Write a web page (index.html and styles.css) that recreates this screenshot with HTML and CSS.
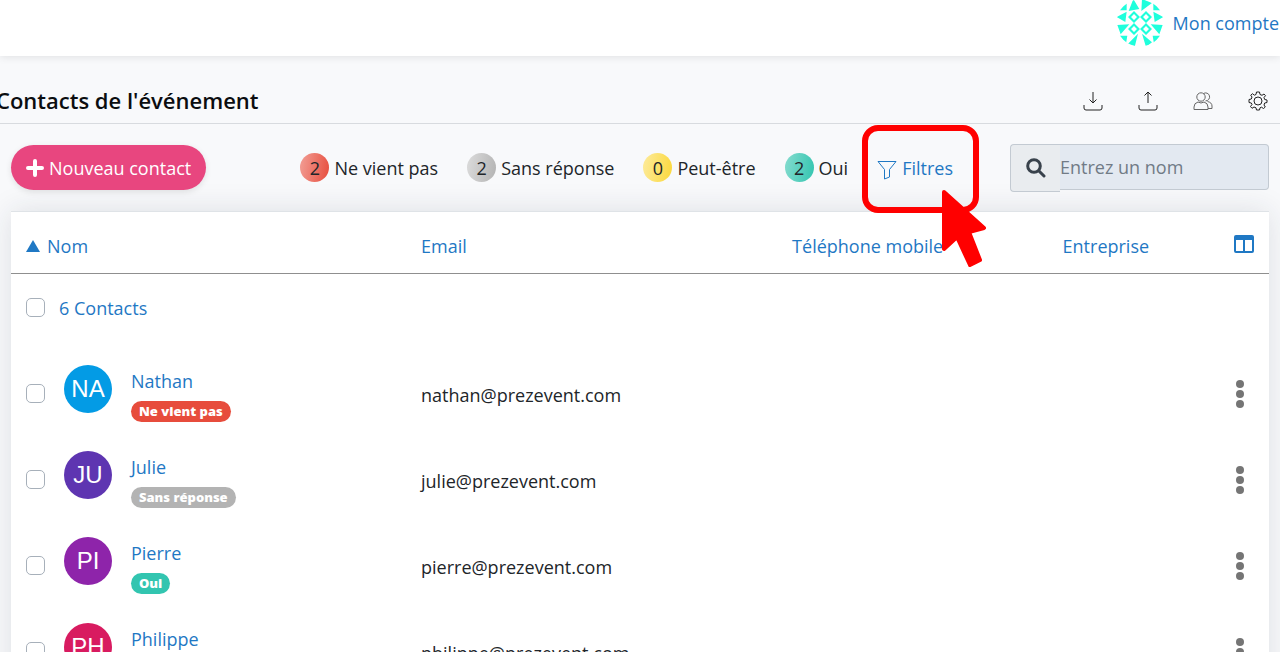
FILE: index.html
```html
<!DOCTYPE html>
<html lang="fr">
<head>
<meta charset="utf-8">
<meta name="viewport" content="width=device-width, initial-scale=1">
<title>Contacts de l'événement</title>
<link rel="stylesheet" href="styles.css">
</head>
<body>
<header class="topbar">
  <a class="account" href="#">
    <svg class="account-avatar" viewBox="0 0 144 144" aria-hidden="true">
      <defs><clipPath id="disc"><circle cx="72" cy="72" r="71"/></clipPath></defs>
      <g clip-path="url(#disc)" fill="#1fffdc">
        <path d="M52 0L70 30L38 36ZM78 0L108 12L76 36Z"/>
        <path d="M66 104L36 134L56 144ZM78 104L108 130L90 144Z"/>
        <path d="M2 54L32 38L28 69ZM4 78L40 76L14 106Z"/>
        <path d="M142 54L112 38L116 69ZM140 78L104 76L130 106Z"/>
        <path d="M10 34L32 12V34ZM112 12L134 34H112ZM10 110H34L30 134ZM110 110H134L114 134Z"/>
        <path fill-rule="evenodd" d="M54 36L72 54L54 72L36 54ZM54 45L45 54L54 63L63 54ZM90 36L108 54L90 72L72 54ZM90 45L81 54L90 63L99 54ZM54 72L72 90L54 108L36 90ZM54 81L45 90L54 99L63 90ZM90 72L108 90L90 108L72 90ZM90 81L81 90L90 99L99 90Z"/>
      </g>
    </svg>
    <span>Mon compte</span>
  </a>
</header>
<main class="page">
  <div class="heading">
    <h1 class="title">Contacts de l'événement</h1>
    <div class="actions">
      <button class="icon-btn" type="button" aria-label="Importer"><svg viewBox="0 0 20 20"><path d="M1 14V17Q1 19 3 19H17Q19 19 19 17V14M10 1V12M6.500 8.500L10 12L13.500 8.500"/></svg></button>
      <button class="icon-btn" type="button" aria-label="Exporter"><svg viewBox="0 0 20 20"><path d="M1 14V17Q1 19 3 19H17Q19 19 19 17V14M10 12V1M6.500 4.500L10 1L13.500 4.500"/></svg></button>
      <button class="icon-btn users" type="button" aria-label="Groupes"><svg viewBox="0 0 20 20"><circle cx="8" cy="6" r="4.200"/><path d="M1 18.500V16Q1 12 5 11Q8 13 11 11Q15 12 15 16V18.500ZM10.500 2.500A4 4 0 1 1 12.500 9.900M14.500 10.500Q19 11.500 19 15V17.500H15"/></svg></button>
      <button class="icon-btn" type="button" aria-label="Paramètres"><svg viewBox="0 0 20 20"><circle cx="10" cy="10" r="4"/><path d="M8.500 1H11.500L12 3.500L14 4.300L16 3L17.500 4.700L16 6.500L16.700 8.500L19 9V11.500L16.700 12L16 14L17.300 16L15.500 17.500L13.500 16.200L12 16.800L11.500 19H8.500L8 16.800L6 16L4 17.300L2.500 15.500L4 13.500L3.300 12L1 11.500V8.500L3.300 8L4 6L2.700 4.200L4.500 2.700L6.300 4.200L8 3.500Z"/></svg></button>
    </div>
  </div>
  <div class="toolbar">
    <button class="new-contact" type="button"><svg class="plus" viewBox="0 0 18 18" aria-hidden="true"><path d="M9 2V16M2 9H16"/></svg>Nouveau contact</button>
    <div class="filters">
      <span class="stat"><span class="count declined">2</span>Ne vient pas</span>
      <span class="stat"><span class="count pending">2</span>Sans réponse</span>
      <span class="stat"><span class="count maybe">0</span>Peut-être</span>
      <span class="stat"><span class="count accepted">2</span>Oui</span>
      <a class="filter-link" href="#">
        <svg class="funnel" viewBox="0 0 20 20" aria-hidden="true"><path d="M1 1.500H19L12.500 9.500V17L7.500 19V9.500Z"/></svg>Filtres
        <span class="highlight"></span>
        <svg class="pointer" viewBox="0 0 46 80" aria-hidden="true"><path d="M3 3L43 39L28 43L39 71L29 76L16 48L3 60Z"/></svg>
      </a>
    </div>
    <div class="search">
      <label class="search-icon" for="search"><svg viewBox="0 0 20 20" role="img" aria-label="Rechercher"><circle cx="8" cy="8" r="6.300"/><path d="M13 13L18 18"/></svg></label>
      <input class="search-input" id="search" type="text" placeholder="Entrez un nom">
    </div>
  </div>
  <table class="contacts">
    <colgroup><col class="col-name"><col class="col-email"><col class="col-phone"><col class="col-company"><col class="col-menu"></colgroup>
    <thead>
      <tr>
        <th><a class="sort" href="#"><span class="arrow"></span>Nom</a></th>
        <th><a href="#">Email</a></th>
        <th><a href="#">Téléphone mobile</a></th>
        <th><a href="#">Entreprise</a></th>
        <th class="menu-cell"><button class="columns" type="button" aria-label="Colonnes"><svg viewBox="0 0 20 18"><path fill-rule="evenodd" d="M2 0H18Q20 0 20 2V16Q20 18 18 18H2Q0 18 0 16V2Q0 0 2 0ZM2 5V16H9V5ZM11 5V16H18V5Z"/></svg></button></th>
      </tr>
    </thead>
    <tbody>
      <tr class="all"><td colspan="5"><label class="select-all"><input class="check" type="checkbox">6 Contacts</label></td></tr>
      <tr>
        <td><div class="person"><input class="check" type="checkbox" aria-label="Nathan"><span class="avatar blue">NA</span><div class="identity"><a href="#">Nathan</a><span class="badge declined-bg">Ne vient pas</span></div></div></td>
        <td class="email">nathan@prezevent.com</td><td></td><td></td>
        <td class="menu-cell"><button class="dots" type="button" aria-label="Actions"><i></i><i></i><i></i></button></td>
      </tr>
      <tr>
        <td><div class="person"><input class="check" type="checkbox" aria-label="Julie"><span class="avatar indigo">JU</span><div class="identity"><a href="#">Julie</a><span class="badge pending-bg">Sans réponse</span></div></div></td>
        <td class="email">julie@prezevent.com</td><td></td><td></td>
        <td class="menu-cell"><button class="dots" type="button" aria-label="Actions"><i></i><i></i><i></i></button></td>
      </tr>
      <tr>
        <td><div class="person"><input class="check" type="checkbox" aria-label="Pierre"><span class="avatar purple">PI</span><div class="identity"><a href="#">Pierre</a><span class="badge accepted-bg">Oui</span></div></div></td>
        <td class="email">pierre@prezevent.com</td><td></td><td></td>
        <td class="menu-cell"><button class="dots" type="button" aria-label="Actions"><i></i><i></i><i></i></button></td>
      </tr>
      <tr>
        <td><div class="person"><input class="check" type="checkbox" aria-label="Philippe"><span class="avatar pink">PH</span><div class="identity"><a href="#">Philippe</a></div></div></td>
        <td class="email">philippe@prezevent.com</td><td></td><td></td>
        <td class="menu-cell"><button class="dots" type="button" aria-label="Actions"><i></i><i></i><i></i></button></td>
      </tr>
    </tbody>
  </table>
</main>
</body>
</html>
```
FILE: styles.css
```css
* { box-sizing: border-box; }
body {
  margin: 0;
  height: 100vh;
  overflow: hidden;
  background: #f8f9fb;
  color: #212529;
  font: 18px/24px "Open Sans", "Noto Sans", sans-serif;
}
a { color: #1f78c4; text-decoration: none; }
button { border: 0; padding: 0; background: none; font: inherit; cursor: pointer; }
svg { display: block; }

.topbar {
  display: flex;
  justify-content: flex-end;
  height: 56px;
  background: #fff;
  box-shadow: 0 1px 8px rgba(0, 0, 0, 0.1);
}
.account { display: flex; align-items: center; gap: 9px; height: 46px; padding-right: 1px; }
.account-avatar { width: 48px; height: 48px; }

.heading {
  display: flex;
  align-items: center;
  justify-content: space-between;
  height: 68px;
  padding: 20px 12px 0 0;
  border-bottom: 1px solid #d8dbdf;
}
.title { margin: 0 0 0 -4px; color: #0b0d10; font-size: 22px; line-height: 30px; font-weight: 600; }
.actions { display: flex; gap: 35px; padding-top: 3px; }
.icon-btn svg { width: 20px; height: 20px; fill: none; stroke: #222; stroke-width: 1; }
.icon-btn.users svg { stroke: #666; }

.toolbar { display: flex; align-items: center; height: 87px; padding: 0 11px; }
.new-contact {
  display: flex;
  align-items: center;
  gap: 5px;
  height: 45px;
  padding: 0 15px;
  border-radius: 23px;
  background: #e8467f;
  color: #fff;
  box-shadow: 0 2px 6px rgba(0, 0, 0, 0.1);
}
.plus { width: 18px; height: 18px; stroke: #fff; stroke-width: 4; stroke-linecap: round; }
.filters { display: flex; align-items: center; gap: 29px; margin: 0 57px 0 auto; }
.stat { display: flex; align-items: center; gap: 5px; white-space: nowrap; }
.count { width: 29px; height: 29px; border-radius: 50%; line-height: 30px; text-align: center; }
.declined { background: linear-gradient(100deg, #f2a097, #e74c3c); }
.pending { background: linear-gradient(100deg, #dcdcdc, #b3b3b3); }
.maybe { background: linear-gradient(100deg, #fdeb9d, #fbd83a); }
.accepted { background: linear-gradient(100deg, #86dccf, #32c5b0); }
.filter-link { position: relative; display: flex; align-items: center; gap: 5px; }
.funnel { width: 20px; height: 20px; margin-top: 4px; fill: none; stroke: #1f78c4; stroke-width: 1; }
.highlight { position: absolute; inset: -31px -26px -33px -15px; border: 6px solid #f00; border-radius: 16px; }
.pointer { position: absolute; top: 33px; left: 64px; width: 46px; height: 80px; z-index: 2; fill: #f00; stroke: #f00; stroke-width: 4; stroke-linejoin: round; }

.search { display: flex; align-items: flex-start; width: 259px; height: 48px; }
.search-icon {
  display: flex;
  align-items: center;
  justify-content: center;
  width: 50px;
  height: 48px;
  border: 1px solid #c3cad2;
  border-right: 0;
  border-radius: 4px 0 0 4px;
  background: #e9ecef;
}
.search-icon svg { width: 20px; height: 20px; fill: none; stroke: #39424c; stroke-width: 3; stroke-linecap: round; }
.search-input {
  flex: 1;
  min-width: 0;
  height: 46px;
  padding: 0;
  border: 1px solid #c3cad2;
  border-left: 0;
  border-radius: 0 4px 4px 0;
  background: #e3e9f1;
  color: #495057;
  font: inherit;
}
.search-input::placeholder { color: #717b86; opacity: 1; }

.contacts {
  width: calc(100% - 22px);
  margin: 0 11px;
  table-layout: fixed;
  border-collapse: collapse;
  background: #fff;
  box-shadow: 0 0 28px rgba(30, 40, 60, 0.12);
}
.col-name { width: 31.4%; }
.col-email { width: 29.5%; }
.col-phone { width: 21.5%; }
.col-menu { width: 59px; }
.contacts th, .contacts td { padding: 0 0 0 15px; text-align: left; font-weight: 400; }
.contacts th { height: 62px; padding-top: 7px; border-top: 1px solid #dfe3e7; border-bottom: 1px solid #8f8f8f; }
.contacts tbody tr { height: 86px; }
.contacts tbody .all { height: 77px; }
.sort { display: flex; align-items: center; gap: 7px; }
.arrow { border: 7px solid transparent; border-top: 0; border-bottom: 12px solid #1f78c4; }
.contacts .menu-cell { padding: 0; }
.contacts th.menu-cell { padding: 3px 0 0 8px; }
.columns, .dots { display: flex; flex-direction: column; align-items: center; width: 100%; }
.columns svg { width: 20px; height: 18px; fill: #1f78c4; }
.select-all { display: flex; align-items: center; gap: 14px; padding-bottom: 9px; color: #1f78c4; }
.check {
  flex: none;
  appearance: none;
  width: 19px;
  height: 19px;
  margin: 0;
  border: 1px solid #a7b0ba;
  border-radius: 5px;
  background: #fff;
}
.check:checked { background: #1f78c4; }
.person { display: flex; align-items: flex-start; height: 58px; }
.person .check { margin-top: 19px; }
.avatar {
  width: 48px;
  height: 48px;
  margin: 0 19px;
  border-radius: 50%;
  color: #fff;
  font: 24px/48px "Liberation Sans", Arial, sans-serif;
  text-align: center;
}
.blue { background: #039be5; }
.indigo { background: #5e35b1; }
.purple { background: #8e24aa; }
.pink { background: #d81b60; }
.identity { display: flex; flex-direction: column; align-items: flex-start; gap: 8px; padding-top: 4px; }
.badge { padding: 0 8px; border-radius: 11px; color: #fff; font-size: 13px; line-height: 21px; font-weight: 800; }
.declined-bg { background: #e74c3c; }
.pending-bg { background: #b3b3b3; }
.accepted-bg { background: #32c5b0; }
.contacts .email { padding-top: 3px; }
.dots { gap: 2px; }
.dots i { width: 8px; height: 8px; border-radius: 50%; background: #757575; }
```
